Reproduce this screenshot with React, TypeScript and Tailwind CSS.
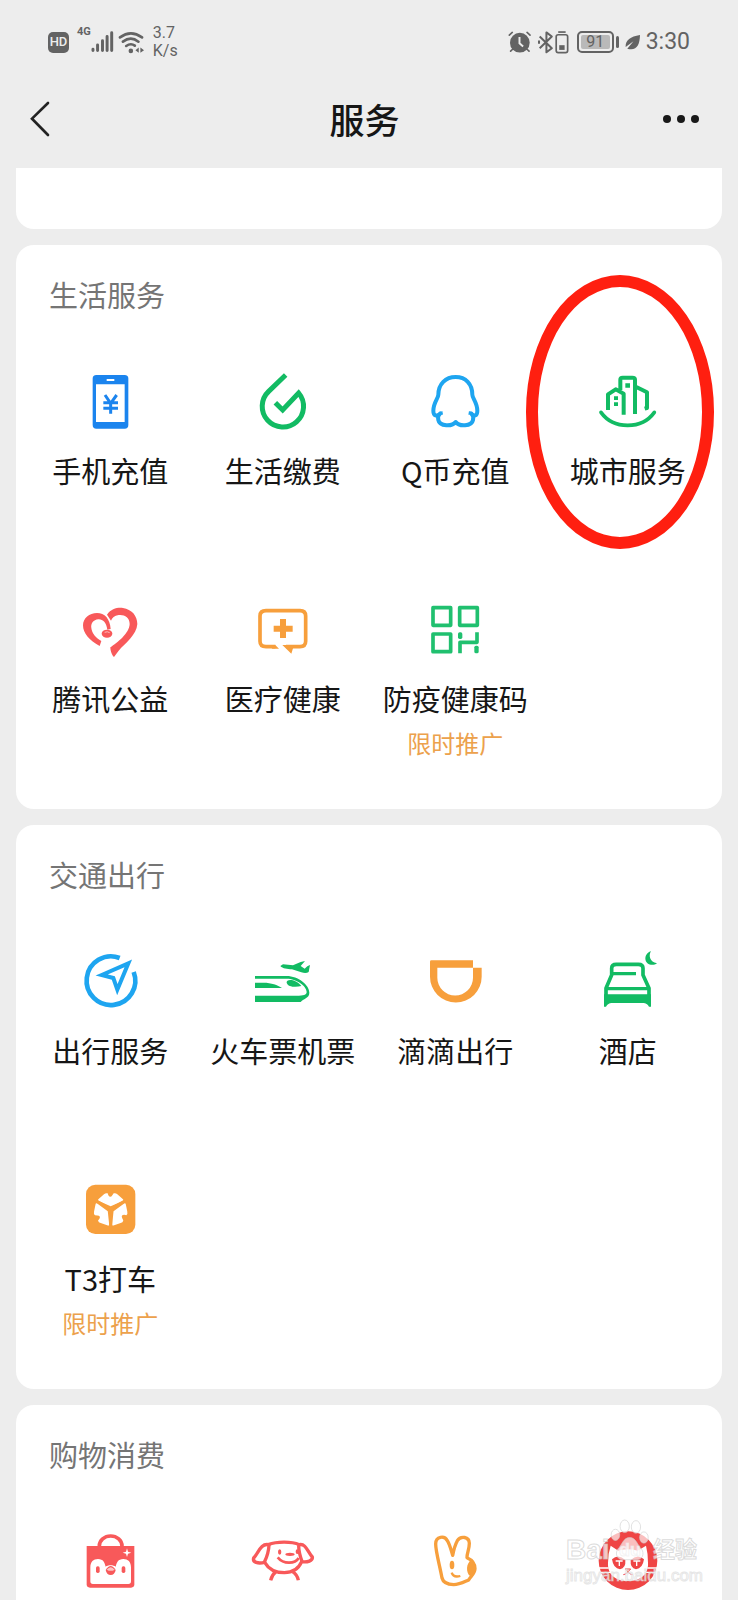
import { type ReactNode } from 'react';

type IconProps = {
  viewBox: string;
  children: ReactNode;
};

type Service = {
  name: string;
  icon: ReactNode;
  showName?: boolean;
  promo?: string;
  circled?: boolean;
};

const GREEN = '#12bb63';
const BLUE = '#1ea5f0';
const ORANGE = '#f79f3c';
const RED = '#f8595a';

function Icon({ viewBox, children }: IconProps) {
  return (
    <svg viewBox={viewBox} className="size-16" fill="none" aria-hidden="true">
      {children}
    </svg>
  );
}

const phoneIcon = (
  <Icon viewBox="234 390 192 192">
    <rect x="278" y="405" width="107" height="161" rx="11" fill="#1b84ee" />
    <path d="M288 433H374V546H288Z" fill="#fff" />
    <path d="M320 420H343" stroke="#fff" strokeWidth="6" />
    <path
      d="M315 465L332 490L350 465M310 488H354M310 505H354M332 488V521"
      stroke="#1b84ee"
      strokeWidth="9"
    />
  </Icon>
);

const billsIcon = (
  <Icon viewBox="753 390 192 192">
    <path
      d="M857 405L806 454A62 62 0 1 0 896 459L848 510L826 488"
      stroke={GREEN}
      strokeWidth="15"
    />
  </Icon>
);

const qqIcon = (
  <Icon viewBox="162 390 192 192">
    <path
      d="M260 411C230 411 208 432 208 464C208 475 193 488 193 512C193 528 203 531 214 520C208 525 206 531 208 540C212 560 250 560 260 546C270 560 308 560 312 540C314 531 312 525 306 520C315 531 325 528 325 512C325 488 310 475 310 464C310 432 290 411 260 411Z"
      stroke={BLUE}
      strokeWidth="12"
      strokeLinejoin="round"
    />
    <path d="M204 522L220 513L222 524ZM316 522L300 513L298 524Z" fill={BLUE} />
  </Icon>
);

const cityIcon = (
  <Icon viewBox="681 390 192 192">
    <path
      d="M696 517Q724 556 776 556Q828 556 856 517"
      stroke={GREEN}
      strokeWidth="11"
      strokeLinecap="round"
    />
    <path
      d="M717 510V463L740 448L764 461V524M754 450V419Q754 413 761 413H790Q798 413 798 419V522M802 441L834 457V504L827 506"
      stroke={GREEN}
      strokeWidth="12"
      strokeLinejoin="round"
    />
    <path d="M769 430H783V443H769ZM735 469H747V480H735ZM735 487H747V498H735Z" fill={GREEN} />
  </Icon>
);

const heartIcon = (
  <Icon viewBox="144 54 192 192">
    <path
      d="M209 198C178 181 159 160 159 136C159 115 178 99 201 99C224 99 240 116 242 147L232 149C229 127 218 117 205 118C190 120 182 130 184 144C186 161 198 174 214 183Z"
      fill={RED}
    />
    <path
      d="M231 104C244 86 262 82 279 84C305 88 322 107 322 132C320 165 285 190 266 212L252 231C246 226 241 212 241 202C262 188 298 160 299 132C299 112 283 103 266 105C253 107 246 114 243 122Z"
      fill={RED}
    />
    <ellipse cx="231" cy="161" rx="16" ry="12" fill={RED} />
    <path d="M224 157Q232 153 239 158" stroke="#fbb" strokeWidth="3" />
  </Icon>
);

const medicalIcon = (
  <Icon viewBox="663 54 192 192">
    <path
      d="M736 200H708Q690 200 690 184V108Q690 92 708 92H810Q827 92 827 108V184Q827 200 810 200H768"
      stroke={ORANGE}
      strokeWidth="11"
    />
    <path d="M757 195L784 221L792 195ZM735 194L747 206H725Z" fill={ORANGE} />
    <path d="M759 117V174M731 146H788" stroke={ORANGE} strokeWidth="18" />
  </Icon>
);

const healthCodeIcon = (
  <Icon viewBox="189 54 192 192">
    <path
      d="M219 83H272V136H219ZM299 83H352V136H299ZM219 162H272V215H219Z"
      stroke="#20c06f"
      strokeWidth="11"
      strokeLinejoin="round"
    />
    <path d="M300 220V187H351V157" stroke="#20c06f" strokeWidth="11" strokeLinejoin="round" />
    <rect x="294" y="157" width="13" height="20" rx="5" fill="#20c06f" />
    <rect x="343" y="197" width="13" height="23" rx="5" fill="#20c06f" />
  </Icon>
);

const travelIcon = (
  <Icon viewBox="144 330 192 192">
    <path d="M269 354A73 73 0 1 0 311 396" stroke={BLUE} strokeWidth="14" />
    <path d="M215 405L295 370L262 449L250 414Z" stroke={BLUE} strokeWidth="12" />
  </Icon>
);

const trainIcon = (
  <Icon viewBox="663 330 192 192">
    <path
      d="M675 408H770C805 408 838 435 838 458C838 475 819 476 812 486H675V467H800C820 467 830 465 830 456C830 438 800 416 770 416H675Z"
      fill={GREEN}
    />
    <path d="M770 428C768 416 797 416 814 438C798 442 774 442 770 428Z" fill={GREEN} />
    <path d="M675 428H700C725 428 742 435 756 444H675Z" fill={GREEN} />
    <path
      d="M751 378L759 373L789 376L812 366L825 363L812 378L824 386L832 379L840 375L836 396Q828 402 814 397L786 388C772 387 758 386 751 378Z"
      fill={GREEN}
    />
  </Icon>
);

const didiIcon = (
  <Icon viewBox="162 90 192 192">
    <path
      d="M183 125Q183 121 187 121H312V143H338V170A77 77 0 0 1 183 170ZM205 143V173A53 53 0 0 0 312 173V143Z"
      fill={ORANGE}
      fillRule="evenodd"
    />
  </Icon>
);

const hotelIcon = (
  <Icon viewBox="681 90 192 192">
    <path
      d="M711 228V205L728 165V145Q728 133 742 133H808Q822 133 822 145V165L840 205V228"
      stroke={GREEN}
      strokeWidth="11"
      strokeLinejoin="round"
    />
    <path d="M730 161H801M710 206H841" stroke={GREEN} strokeWidth="10" />
    <path d="M705 223H846V260H840Q834 249 823 249H728Q717 249 711 260H705Z" fill={GREEN} />
    <path d="M846 94C838 106 842 126 864 130C852 139 829 135 829 115C830 103 838 96 846 94Z" fill={GREEN} />
  </Icon>
);

const petal =
  'M205 118L222 103Q227 98 233 100L235 106Q241 115 247 106L251 100Q257 98 262 103L279 118Q282 121 278 123L242 139L206 123Q202 121 205 118Z';

const t3Icon = (
  <Icon viewBox="144 54 192 192">
    <rect x="168" y="74" width="148" height="148" rx="28" fill={ORANGE} />
    <path d={petal} fill="#fff" />
    <path d={petal} fill="#fff" transform="rotate(120 242 149)" />
    <path d={petal} fill="#fff" transform="rotate(240 242 149)" />
    <path d="M242 147V202M242 147L290 120M242 147L194 120" stroke={ORANGE} strokeWidth="9" />
  </Icon>
);

const bagIcon = (
  <Icon viewBox="144 390 192 192">
    <path d="M208 438A34 30 0 0 1 276 438" stroke={RED} strokeWidth="11" />
    <path d="M170 438H313V553Q313 563 303 563H180Q170 563 170 553Z" fill={RED} />
    <path
      d="M181 502C181 485 190 477 204 477C220 477 224 488 227 500C233 494 251 494 257 500C260 488 264 477 280 477C294 477 303 485 303 502V544Q303 552 295 552H189Q181 552 181 544Z"
      fill="#fff"
    />
    <path d="M227 510Q242 486 257 510Q254 525 242 525Q230 525 227 510Z" fill={RED} />
    <path d="M230 509Q242 516 254 509Q242 494 230 509Z" fill="#fcc4c4" />
    <rect x="198" y="499" width="11" height="20" rx="5" fill={RED} />
    <rect x="275" y="499" width="11" height="20" rx="5" fill={RED} />
    <path d="M291 445L294 455L304 458L294 461L291 471L288 461L278 458L288 455Z" fill="#fff" />
  </Icon>
);

const dogIcon = (
  <Icon viewBox="663 390 192 192">
    <path
      d="M715 434C740 424 785 424 808 434C828 430 832 455 847 471C849 482 832 488 815 485C806 506 790 518 763 518C735 518 715 506 704 487C684 492 667 487 671 474C686 458 692 430 715 434Z"
      stroke={RED}
      strokeWidth="10"
      strokeLinejoin="round"
    />
    <path
      d="M717 435Q716 460 703 487M806 436Q806 458 816 484M738 515Q726 524 722 541M788 515Q802 524 805 541"
      stroke={RED}
      strokeWidth="10"
    />
    <ellipse cx="749" cy="456" rx="5" ry="8" fill={RED} />
    <ellipse cx="802" cy="455" rx="5" ry="7" fill={RED} />
    <ellipse cx="780" cy="463" rx="14" ry="5" fill={RED} />
    <path d="M743 472Q756 488 777 488Q798 488 806 474" stroke={RED} strokeWidth="8" />
  </Icon>
);

const rabbitIcon = (
  <Icon viewBox="69 90 192 192">
    <path
      d="M126 234C120 200 107 155 107 132C107 108 134 106 142 122C150 135 153 150 158 166C161 150 165 135 172 122C182 106 208 110 208 130C208 150 200 160 201 173C217 180 225 190 225 206C224 222 213 228 206 240C192 246 178 254 161 254C142 253 129 246 126 234Z"
      stroke={ORANGE}
      strokeWidth="10"
      strokeLinejoin="round"
    />
    <path d="M214 180C199 188 196 218 211 229C220 222 229 216 228 203C228 192 221 184 214 180Z" fill={ORANGE} />
    <ellipse cx="156" cy="195" rx="7" ry="13" fill={ORANGE} />
    <path d="M155 218Q160 234 181 228" stroke={ORANGE} strokeWidth="7" />
  </Icon>
);

const catIcon = (
  <Icon viewBox="588 90 192 192">
    <circle cx="684" cy="182" r="88" fill="#ef4545" />
    <path
      d="M632 137L655 152Q684 144 713 152L738 137Q744 160 744 188C746 225 720 243 684 243C648 243 622 225 624 188Q624 160 632 137Z"
      fill="#fff"
    />
    <path
      d="M636 178Q655 160 676 180Q678 205 660 208Q640 206 636 178ZM732 178Q713 160 692 180Q690 205 708 208Q728 206 732 178Z"
      fill="#ef4545"
    />
    <path
      d="M647 183H668M658 183V198M700 183H721M710 183V198M594 204H626M597 217H630M742 204H774M738 217H771"
      stroke="#fff"
      strokeWidth="4"
    />
    <path d="M676 207H692L684 215ZM670 224Q678 224 684 215Q690 224 698 224" stroke="#ef4545" strokeWidth="3" />
  </Icon>
);

const lifeServices: Service[] = [
  { name: '手机充值', icon: phoneIcon },
  { name: '生活缴费', icon: billsIcon },
  { name: 'Q币充值', icon: qqIcon },
  { name: '城市服务', icon: cityIcon, circled: true },
  { name: '腾讯公益', icon: heartIcon },
  { name: '医疗健康', icon: medicalIcon },
  { name: '防疫健康码', icon: healthCodeIcon, promo: '限时推广' },
];

const transportServices: Service[] = [
  { name: '出行服务', icon: travelIcon },
  { name: '火车票机票', icon: trainIcon },
  { name: '滴滴出行', icon: didiIcon },
  { name: '酒店', icon: hotelIcon },
  { name: 'T3打车', icon: t3Icon, promo: '限时推广' },
];

const shoppingServices: Service[] = [
  { name: '品牌发现', icon: bagIcon, showName: false },
  { name: '京东购物', icon: dogIcon, showName: false },
  { name: '转转二手', icon: rabbitIcon, showName: false },
  { name: '唯品会', icon: catIcon, showName: false },
];

function ServiceItem({ name, icon, showName = true, promo, circled }: Service) {
  return (
    <a href="#" aria-label={name} className="relative flex flex-col items-center pt-[54px]">
      {icon}
      {showName && <span className="mt-4 text-[29px] leading-10 whitespace-nowrap">{name}</span>}
      {promo && (
        <span className="mt-[7px] text-2xl leading-9 whitespace-nowrap text-[#eca14c]">{promo}</span>
      )}
      {circled && (
        <span className="absolute -top-[41px] right-0 -left-4 h-[274px] rounded-[50%] border-[12px] border-[#ff1f10]" />
      )}
    </a>
  );
}

function ServiceSection({ title, services }: { title: string; services: Service[] }) {
  return (
    <section className="shrink-0 rounded-[18px] bg-white px-2 pt-[29px] pb-[37px]">
      <h2 className="mb-0.5 px-[25px] text-[29px] leading-10 text-[#757575]">{title}</h2>
      <div className="grid auto-rows-[228px] grid-cols-4">
        {services.map((service) => (
          <ServiceItem key={service.name} {...service} />
        ))}
      </div>
    </section>
  );
}

function StatusBar() {
  return (
    <div className="flex h-[84px] shrink-0 items-center justify-between px-12 font-[Roboto,sans-serif] text-[#636363]">
      <div className="flex items-center">
        <span className="flex h-[21px] w-[21px] items-center justify-center rounded-[5px] bg-[#636363] text-[13px] font-medium text-[#ededed]">
          HD
        </span>
        <span className="ml-2 self-start pt-px text-[11px] leading-[14px] font-bold">4G</span>
        <svg viewBox="262 93 70 66" className="h-[22px] w-[23px]" aria-hidden="true">
          <path
            d="M268 148V152M282 135V152M297 122V152M311 109V152M325 98V152"
            stroke="currentColor"
            strokeWidth="9"
            strokeLinecap="round"
          />
        </svg>
        <svg viewBox="348 90 82 69" className="ml-1 h-[23px] w-[27px]" fill="none" aria-hidden="true">
          <path
            d="M354 109Q387 85 421 109M363 122Q387 104 410 122M373 135Q387 125 399 134"
            stroke="currentColor"
            strokeWidth="8"
            strokeLinecap="round"
          />
          <circle cx="387" cy="150" r="7" fill="currentColor" />
          <path d="M401 148L411 140V156ZM427 148L416 140V156Z" fill="currentColor" />
        </svg>
        <span className="ml-2 text-base leading-[18px]">
          3.7
          <br />
          K/s
        </span>
      </div>
      <div className="flex items-center">
        <svg viewBox="420 92 70 66" className="h-[22px] w-[23px]" fill="none" aria-hidden="true">
          <circle cx="456" cy="127" r="30" fill="currentColor" />
          <path
            d="M424 104L433 96M487 104L478 96M434 147L428 153M478 147L484 153"
            stroke="currentColor"
            strokeWidth="5"
            strokeLinecap="round"
          />
          <path d="M455 110V129L466 139" stroke="#ededed" strokeWidth="6" />
        </svg>
        <svg viewBox="510 92 92 68" className="ml-[7px] h-[23px] w-[31px]" fill="none" aria-hidden="true">
          <path
            d="M515 108L551 143L535 155V96L551 108L515 143M513 120V130"
            stroke="currentColor"
            strokeWidth="6"
            strokeLinejoin="round"
          />
          <rect x="564" y="103" width="34" height="53" rx="6" stroke="currentColor" strokeWidth="5" />
          <path d="M570 95H592" stroke="currentColor" strokeWidth="5" />
          <path d="M573 134H589V148H573Z" fill="currentColor" />
        </svg>
        <span className="ml-2 flex h-[22px] w-[37px] rounded-[5px] border-2 border-[#636363] p-0.5">
          <span className="flex flex-1 items-center justify-center rounded-xs bg-[#b9b9b9] text-base leading-4">
            91
          </span>
        </span>
        <span className="ml-0.5 h-3 w-[3px] rounded-full bg-[#636363]" />
        <svg viewBox="765 103 46 46" className="ml-[6px] size-[15px]" aria-hidden="true">
          <path d="M811 103C780 108 766 120 767 140L791 122L772 145C800 153 810 135 811 103Z" fill="currentColor" />
        </svg>
        <span className="ml-[6px] text-[23px] leading-7">3:30</span>
      </div>
    </div>
  );
}

function Header() {
  return (
    <header className="flex h-[84px] shrink-0 items-center justify-between pr-[39px] pb-3.5 pl-[30px]">
      <button type="button" aria-label="返回" className="w-10">
        <svg viewBox="90 303 60 108" className="h-9 w-5" fill="none" aria-hidden="true">
          <path d="M144 309L96 356L144 405" stroke="#222" strokeWidth="8" strokeLinecap="round" />
        </svg>
      </button>
      <h1 className="text-[35px] leading-[44px] font-medium">服务</h1>
      <button type="button" aria-label="更多" className="flex w-10 items-center justify-end gap-1.5">
        <span className="size-2 rounded-full bg-[#191919]" />
        <span className="size-2 rounded-full bg-[#191919]" />
        <span className="size-2 rounded-full bg-[#191919]" />
      </button>
    </header>
  );
}

function Watermark() {
  return (
    <div className="pointer-events-none absolute right-[40px] bottom-3.5 w-[132px] font-['Liberation_Sans','Noto_Sans_CJK_SC',sans-serif] text-white/70 [-webkit-text-stroke:1px_#c4c4c499]">
      <svg
        viewBox="630 56 126 130"
        className="absolute -top-4 left-[43px] h-[43px] w-[42px]"
        fill="#ffffffa8"
        stroke="#cccccc99"
        strokeWidth="3"
        aria-hidden="true"
      >
        <ellipse cx="677" cy="81" rx="14" ry="19" />
        <ellipse cx="711" cy="83" rx="14" ry="19" />
        <ellipse cx="649" cy="107" rx="13" ry="17" />
        <ellipse cx="735" cy="115" rx="13" ry="17" />
        <path d="M692 115C672 115 668 140 656 150C646 166 656 184 674 182H712C730 184 738 164 728 150C716 140 712 115 692 115Z" />
      </svg>
      <p className="flex h-8 items-center leading-8 font-bold">
        <span className="w-[53px] text-[28px]">Bai</span>
        <span className="w-[34px] text-lg">du</span>
        <span className="text-[22px] whitespace-nowrap">经验</span>
      </p>
      <p className="text-[17px] leading-5 [-webkit-text-stroke:1px_#d0d0d088]">jingyan.baidu.com</p>
    </div>
  );
}

export default function App() {
  return (
    <div className="relative flex h-screen flex-col overflow-hidden bg-[#ededed] font-['Noto_Sans_CJK_SC',sans-serif] text-[#161616]">
      <StatusBar />
      <Header />
      <main className="flex min-h-0 flex-1 flex-col gap-4 overflow-hidden px-4">
        <div className="h-[61px] shrink-0 rounded-b-[18px] bg-white" />
        <ServiceSection title="生活服务" services={lifeServices} />
        <ServiceSection title="交通出行" services={transportServices} />
        <ServiceSection title="购物消费" services={shoppingServices} />
      </main>
      <Watermark />
    </div>
  );
}
